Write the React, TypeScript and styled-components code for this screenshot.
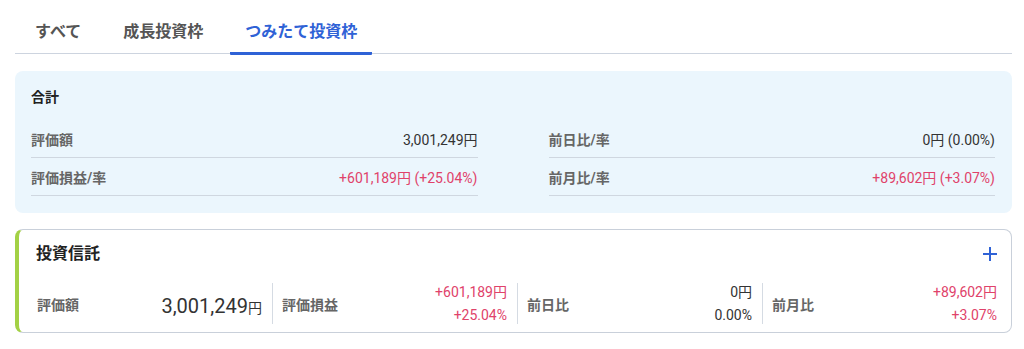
import styled, { createGlobalStyle } from "styled-components";

const GlobalStyle = createGlobalStyle`
    body {
        margin: 0;
        background: #fff;
        font-family: Roboto, "Noto Sans CJK JP", sans-serif;
        color: #333;
    }
`

const tabs = ["すべて", "成長投資枠", "つみたて投資枠"];

const summary = [
    [
        { label: "評価額", value: "3,001,249円", plus: false },
        { label: "評価損益/率", value: "+601,189円 (+25.04%)", plus: true },
    ],
    [
        { label: "前日比/率", value: "0円 (0.00%)", plus: false },
        { label: "前月比/率", value: "+89,602円 (+3.07%)", plus: true },
    ],
];

const metrics = [
    { label: "前日比", top: "0円", bottom: "0.00%", plus: false },
    { label: "前月比", top: "+89,602円", bottom: "+3.07%", plus: true },
];

const App = () => {
    return (
        <>
            <GlobalStyle />
            <Page>
                <TabBar>
                    {tabs.map((t, i) => (
                        <Tab key={t} $active={i === 2}>{t}</Tab>
                    ))}
                </TabBar>

                <SummaryCard>
                    <SummaryTitle>合計</SummaryTitle>
                    <SummaryGrid>
                        {summary.map((col, ci) => (
                            <div key={ci}>
                                {col.map(row => (
                                    <SummaryRow key={row.label}>
                                        <RowLabel>{row.label}</RowLabel>
                                        <RowValue $plus={row.plus}>{row.value}</RowValue>
                                    </SummaryRow>
                                ))}
                            </div>
                        ))}
                    </SummaryGrid>
                </SummaryCard>

                <FundCard>
                    <FundHeader>
                        <FundTitle>投資信託</FundTitle>
                        <PlusButton aria-label="追加">
                            <svg width="16" height="16" viewBox="0 0 16 16">
                                <path d="M8 1v14M1 8h14" stroke="#2f62d6" strokeWidth="2" />
                            </svg>
                        </PlusButton>
                    </FundHeader>
                    <MetricGrid>
                        <MetricCell>
                            <MetricLabel>評価額</MetricLabel>
                            <BigValue>3,001,249<small>円</small></BigValue>
                        </MetricCell>
                        <MetricCell $divider>
                            <MetricLabel>評価損益</MetricLabel>
                            <StackValue $plus>
                                <span>+601,189円</span>
                                <span>+25.04%</span>
                            </StackValue>
                        </MetricCell>
                        {metrics.map(m => (
                            <MetricCell key={m.label} $divider>
                                <MetricLabel>{m.label}</MetricLabel>
                                <StackValue $plus={m.plus}>
                                    <span>{m.top}</span>
                                    <span>{m.bottom}</span>
                                </StackValue>
                            </MetricCell>
                        ))}
                    </MetricGrid>
                </FundCard>
            </Page>
        </>
    )
}

export default App;

const Page = styled.div`
    width: 1024px;
    padding: 0 12px 0 15px;
    box-sizing: border-box;
`

const TabBar = styled.nav`
    display: flex;
    gap: 12px;
    height: 54px;
    padding-left: 5px;
    border-bottom: 1px solid #cdd4df;
    box-sizing: border-box;
`

const Tab = styled.div<{ $active?: boolean }>`
    height: 55px;
    box-sizing: border-box;
    padding: 22px 15px 0;
    font-size: 16px;
    line-height: 20px;
    font-weight: 700;
    color: ${p => p.$active ? "#2f62d6" : "#555"};
    border-bottom: 3px solid ${p => p.$active ? "#2f62d6" : "transparent"};
    border-radius: 1px;
`

const SummaryCard = styled.section`
    margin-top: 17px;
    padding: 16px 17px 17px 16px;
    background: #ebf6fd;
    border-radius: 8px;
`

const SummaryTitle = styled.h2`
    margin: 0 0 13px;
    font-size: 14px;
    line-height: 20px;
    font-weight: 700;
    color: #222;
`

const SummaryGrid = styled.div`
    display: grid;
    grid-template-columns: 1fr 1fr;
    column-gap: 71px;
`

const SummaryRow = styled.div`
    display: flex;
    justify-content: space-between;
    align-items: center;
    height: 38px;
    box-sizing: border-box;
    border-bottom: 1px solid #cfd7e0;
    font-size: 14px;
`

const RowLabel = styled.span`
    font-weight: 700;
    color: #666;
`

const RowValue = styled.span<{ $plus?: boolean }>`
    color: ${p => p.$plus ? "#e0426a" : "#333"};
`

const FundCard = styled.section`
    margin-top: 16px;
    border: 1px solid #c9d0da;
    border-left: 4px solid #a3d145;
    border-radius: 8px;
    padding: 12px 0 8px;
    background: #fff;
`

const FundHeader = styled.div`
    display: flex;
    justify-content: space-between;
    align-items: center;
    padding: 0 13px 0 17px;
`

const FundTitle = styled.h3`
    margin: 0;
    font-size: 16px;
    line-height: 24px;
    font-weight: 700;
    color: #222;
`

const PlusButton = styled.button`
    display: flex;
    border: none;
    background: none;
    padding: 0;
    cursor: pointer;
`

const MetricGrid = styled.div`
    display: grid;
    grid-template-columns: repeat(4, 1fr);
    margin-top: 17px;
    padding: 0 4px 0 8px;
`

const MetricCell = styled.div<{ $divider?: boolean }>`
    display: flex;
    justify-content: space-between;
    align-items: center;
    height: 41px;
    padding: 0 10px 0 9px;
    border-left: 1px solid ${p => p.$divider ? "#d5dbe3" : "transparent"};
`

const MetricLabel = styled.span`
    font-size: 14px;
    font-weight: 700;
    color: #666;
`

const BigValue = styled.span`
    font-size: 20px;
    color: #333;
    margin-top: 4px;

    small {
        font-size: 14px;
    }
`

const StackValue = styled.div<{ $plus?: boolean }>`
    display: flex;
    flex-direction: column;
    align-items: flex-end;
    font-size: 14px;
    line-height: 23px;
    color: ${p => p.$plus ? "#e0426a" : "#333"};
`
